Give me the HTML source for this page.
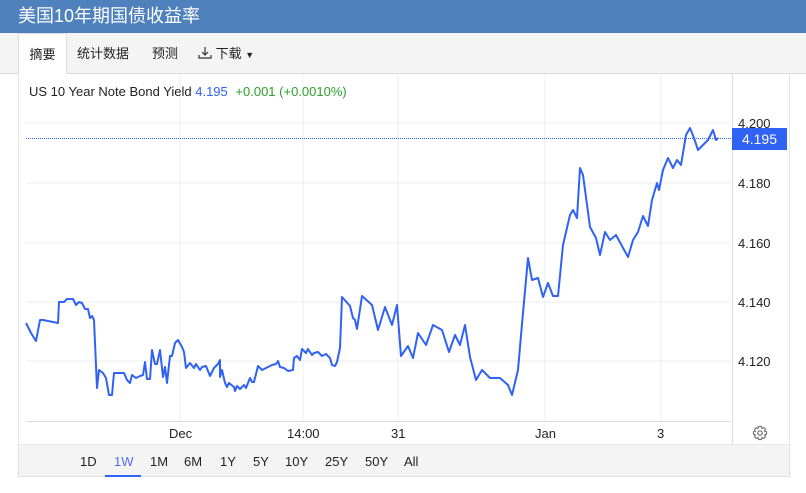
<!DOCTYPE html>
<html><head><meta charset="utf-8"><style>
*{margin:0;padding:0;box-sizing:border-box}
body{width:806px;height:493px;background:#fff;font-family:"Liberation Sans","Noto Sans CJK SC",sans-serif;position:relative;overflow:hidden}
.hdr{position:absolute;left:0;top:0;width:806px;height:33px;background:#4f81bd;color:#fff;font-size:18px;line-height:33px;padding-left:18px}
.tabs{position:absolute;left:0;top:33px;width:806px;height:41px;background:#f4f4f4;border-bottom:1px solid #ddd}
.tab{position:absolute;top:0;height:41px;line-height:41px;font-size:13px;color:#222}
.act{left:18px;width:49px;background:#fff;border:1px solid #ddd;border-bottom:none;height:42px;text-align:center}
.chart{position:absolute;left:18px;top:74px;width:772px;height:370px;background:#fff;border-left:1px solid #e4e4e4;border-right:1px solid #e4e4e4}
.rng{position:absolute;left:18px;top:444px;width:772px;height:33px;background:#f4f4f4;border:1px solid #e0e0e0;border-top:1px solid #e8e8e8}
.rng span{position:absolute;top:9px;font-size:13px;color:#222}
.ax{position:absolute;font-size:13px;color:#222}
</style></head><body>
<div class="hdr">美国10年期国债收益率</div>
<div class="tabs">
<div class="tab act">摘要</div>
<div class="tab" style="left:77px">统计数据</div>
<div class="tab" style="left:152px">预测</div>
<div class="tab" style="left:198px"><svg width="14" height="14" style="vertical-align:-2px" viewBox="0 0 14 14"><path d="M7 1v8M4 6l3 3 3-3M1 9v3h12V9" fill="none" stroke="#333" stroke-width="1.2"/></svg> 下载 <span style="font-size:9px">▼</span></div>
</div>
<div class="chart"></div>
<svg style="position:absolute;left:0;top:0" width="806" height="493">
<g stroke="#ececec" stroke-width="1">
<line x1="180" y1="74" x2="180" y2="421"/><line x1="303" y1="74" x2="303" y2="421"/><line x1="398" y1="74" x2="398" y2="421"/><line x1="545" y1="74" x2="545" y2="421"/><line x1="661" y1="74" x2="661" y2="421"/>
<line x1="26" y1="123" x2="731" y2="123"/><line x1="26" y1="183" x2="731" y2="183"/><line x1="26" y1="243" x2="731" y2="243"/><line x1="26" y1="302" x2="731" y2="302"/><line x1="26" y1="361" x2="731" y2="361"/>
</g>
<line x1="26" y1="421.5" x2="731" y2="421.5" stroke="#ddd"/>
<line x1="732.5" y1="74" x2="732.5" y2="444" stroke="#ddd"/>
<line x1="26" y1="138.5" x2="733" y2="138.5" stroke="#2f6bff" stroke-dasharray="1,1"/>
<polyline fill="none" stroke="#2f62f5" stroke-width="2" stroke-linejoin="round" points="26,323 31,333 36,341 40,320 43,320 58,323 59,302 64,302 67,299 73,299 76,305 79,302 82,303 85,309 88,309 90,318 92,316 94,320 97,388 99,370 103,373 106,378 109,395 112,395 114,373 124,373 127,380 130,383 132,375 136,378 140,376 143,375 145,362 147,379 150,379 152,350 155,364 157,364 160,350 163,377 165,367 167,383 170,356 172,356 175,343 178,340 182,347 184,352 186,368 190,363 194,368 196,364 198,367 200,370 202,367 206,366 210,376 214,368 218,364 220,360 220,377 222,370 225,383 227,387 229,383 234,387 235,391 237,386 240,389 244,385 246,388 250,378 252,382 254,382 258,366 262,370 266,368 272,365 276,364 278,361 280,367 284,368 288,371 293,370 294,358 297,356 300,360 302,349 306,353 308,349 312,355 314,353 318,352 322,356 326,354 330,358 332,365 335,366 337,362 340,348 342,297 350,306 353,318 355,320 357,329 362,296 372,305 378,330 385,307 392,325 397,305 401,356 408,346 413,358 418,333 426,345 433,325 442,330 449,352 455,335 460,345 465,325 470,357 476,380 482,370 490,378 500,378 508,385 512,395 518,370 522,324 528,258 532,280 538,278 543,297 548,283 553,296 558,296 563,245 570,215 573,210 577,218 580,168 583,175 590,227 596,238 600,255 605,232 610,240 616,235 622,246 628,257 633,240 638,232 643,216 648,226 652,200 657,183 659,190 663,170 668,158 673,168 677,160 681,165 686,135 690,128 694,138 698,150 703,145 708,140 713,130 716,140 718,138"/>
<g transform="translate(760,433)" fill="none" stroke="#777" stroke-width="1.2">
<path d="M-1.5,-6.5 L1.5,-6.5 L2,-4.5 L3.8,-5.3 L5.5,-3.6 L4.6,-1.8 L6.5,-1.3 L6.5,1.3 L4.6,1.8 L5.5,3.6 L3.8,5.3 L2,4.5 L1.5,6.5 L-1.5,6.5 L-2,4.5 L-3.8,5.3 L-5.5,3.6 L-4.6,1.8 L-6.5,1.3 L-6.5,-1.3 L-4.6,-1.8 L-5.5,-3.6 L-3.8,-5.3 L-2,-4.5 Z"/>
<circle r="2.3"/></g>
</svg>
<div class="ax" style="left:29px;top:84px;font-size:13px">US 10 Year Note Bond Yield <span style="color:#2f62f5">4.195</span> <span style="color:#2ca02c;margin-left:4px">+0.001 (+0.0010%)</span></div>
<div class="ax" style="left:738px;top:116px">4.200</div>
<div style="position:absolute;left:732px;top:128px;width:55px;height:22px;background:#2f62f5;color:#fff;font-size:14px;line-height:22px;text-align:center">4.195</div>
<div class="ax" style="left:738px;top:176px">4.180</div>
<div class="ax" style="left:738px;top:236px">4.160</div>
<div class="ax" style="left:738px;top:295px">4.140</div>
<div class="ax" style="left:738px;top:354px">4.120</div>
<div class="ax" style="left:169px;top:426px">Dec</div>
<div class="ax" style="left:287px;top:426px">14:00</div>
<div class="ax" style="left:391px;top:426px">31</div>
<div class="ax" style="left:535px;top:426px">Jan</div>
<div class="ax" style="left:657px;top:426px">3</div>
<div class="rng">
<span style="left:61px">1D</span>
<span style="left:95px;color:#4d6df0">1W</span>
<div style="position:absolute;left:86px;top:30px;width:36px;height:2px;background:#2f62f5"></div>
<span style="left:131px">1M</span>
<span style="left:165px">6M</span>
<span style="left:201px">1Y</span>
<span style="left:234px">5Y</span>
<span style="left:266px">10Y</span>
<span style="left:306px">25Y</span>
<span style="left:346px">50Y</span>
<span style="left:385px">All</span>
</div>
</body></html>
